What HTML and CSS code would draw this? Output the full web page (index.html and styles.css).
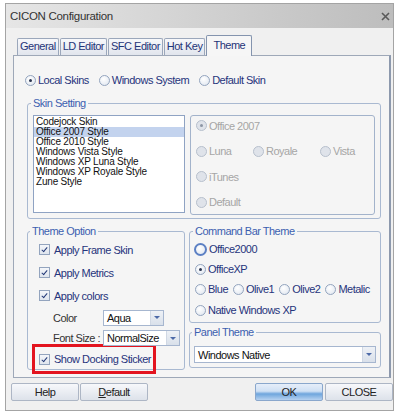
FILE: index.html
```html
<!DOCTYPE html>
<html lang="en">
<head>
  <meta charset="UTF-8" />
  <title>CICON Configuration</title>
  <link rel="stylesheet" href="styles.css">
</head>
<body>
  <div class="window">
    <div class="titlebar">
      <span>CICON Configuration</span>
      <svg class="close" width="9" height="9" viewBox="0 0 9 9">
        <path d="M1 1 L8 8 M8 1 L1 8" stroke="#5a5a5a" stroke-width="1.6" />
      </svg>
    </div>

    <div class="tabs">
      <span class="tab">General</span>
      <span class="tab">LD Editor</span>
      <span class="tab">SFC Editor</span>
      <span class="tab">Hot Key</span>
      <span class="tab active">Theme</span>
    </div>

    <div class="page">
      <div class="skin-source">
        <label class="opt"><span class="radio checked"></span>Local Skins</label>
        <label class="opt"><span class="radio"></span>Windows System</label>
        <label class="opt"><span class="radio"></span>Default Skin</label>
      </div>

      <fieldset class="group skin-group">
        <legend>Skin Setting</legend>
        <div class="skin-body">
          <ul class="listbox">
            <li>Codejock Skin</li>
            <li class="selected">Office 2007 Style</li>
            <li>Office 2010 Style</li>
            <li>Windows Vista Style</li>
            <li>Windows XP Luna Style</li>
            <li>Windows XP Royale Style</li>
            <li>Zune Style</li>
          </ul>
          <div class="style-box">
            <div class="style-row">
              <label class="opt disabled"><span class="radio checked"></span>Office 2007</label>
            </div>
            <div class="style-row three">
              <label class="opt disabled"><span class="radio"></span>Luna</label>
              <label class="opt disabled"><span class="radio"></span>Royale</label>
              <label class="opt disabled"><span class="radio"></span>Vista</label>
            </div>
            <div class="style-row">
              <label class="opt disabled"><span class="radio"></span>iTunes</label>
            </div>
            <div class="style-row">
              <label class="opt disabled"><span class="radio"></span>Default</label>
            </div>
          </div>
        </div>
      </fieldset>

      <div class="columns">
        <fieldset class="group theme-option">
          <legend>Theme Option</legend>
          <label class="check-row"><span class="checkbox"></span>Apply Frame Skin</label>
          <label class="check-row"><span class="checkbox"></span>Apply Metrics</label>
          <label class="check-row"><span class="checkbox"></span>Apply colors</label>
          <div class="field-row color-row">
            <span class="field-label">Color</span>
            <div class="combo combo-color"><span>Aqua</span><span class="drop"></span></div>
          </div>
          <div class="field-row font-row">
            <span class="field-label">Font Size :</span>
            <div class="combo combo-font"><span>NormalSize</span><span class="drop"></span></div>
          </div>
          <label class="check-row marked"><span class="checkbox"></span>Show Docking Sticker</label>
        </fieldset>

        <div class="right-col">
          <fieldset class="group cmdbar">
            <legend>Command Bar Theme</legend>
            <div class="cmd-row"><label class="opt"><span class="radio focus"></span>Office2000</label></div>
            <div class="cmd-row"><label class="opt"><span class="radio checked"></span>OfficeXP</label></div>
            <div class="cmd-row four">
              <label class="opt"><span class="radio"></span>Blue</label>
              <label class="opt"><span class="radio"></span>Olive1</label>
              <label class="opt"><span class="radio"></span>Olive2</label>
              <label class="opt"><span class="radio"></span>Metalic</label>
            </div>
            <div class="cmd-row last"><label class="opt"><span class="radio"></span>Native Windows XP</label></div>
          </fieldset>

          <fieldset class="group panel-theme">
            <legend>Panel Theme</legend>
            <div class="combo combo-panel"><span>Windows Native</span><span class="drop"></span></div>
          </fieldset>
        </div>
      </div>
    </div>

    <div class="buttons">
      <span class="btn">Help</span>
      <span class="btn"><u>D</u>efault</span>
      <span class="spacer"></span>
      <span class="btn ok">OK</span>
      <span class="btn">CLOSE</span>
    </div>
  </div>
</body>
</html>
```

FILE: styles.css
```css
body {
  margin: 0;
  background: #fff;
  font-family: "Liberation Sans", Arial, sans-serif;
  font-size: 11px;
  letter-spacing: -0.5px;
  color: #26347c;
}

.window {
  box-sizing: border-box;
  width: 389px;
  height: 408px;
  margin: 3px 0 0 5px;
  border: 1px solid #a4a4a4;
  background: #f0f0f0;
  display: flex;
  flex-direction: column;
}

.titlebar {
  height: 24px;
  flex: none;
  display: flex;
  align-items: center;
  justify-content: space-between;
  padding: 0 3px 0 4px;
  background: linear-gradient(to right, #e6e6e6, #bdbdbd);
  color: #333;
  font-size: 11.5px;
  letter-spacing: -0.3px;
}

/* tab strip */
.tabs {
  display: flex;
  align-items: flex-end;
  height: 20px;
  margin: 7px 0 0 11px;
  flex: none;
}

.tab {
  box-sizing: border-box;
  height: 17px;
  line-height: 15px;
  padding: 0 2px;
  margin-right: 1px;
  border: 1px solid #9ba7bb;
  border-bottom: none;
  border-radius: 2px 2px 0 0;
  background: linear-gradient(#f7f8fb, #e1e5ed);
  color: #1f3478;
  white-space: nowrap;
}

.tab.active {
  position: relative;
  height: 21px;
  line-height: 18px;
  margin-bottom: -1px;
  padding: 0 6px;
  background: #f6f6f6;
  border-color: #8494ae;
}

.page {
  box-sizing: border-box;
  height: 323px;
  margin: 0 2px 0 7px;
  padding: 17px 8px 0 13px;
  border: 1px solid #9ea8b8;
  border-right: 2px solid #8d99ad;
  background: #f5f5f5;
  flex: none;
}

/* radios and checkboxes */
.opt {
  display: inline-flex;
  align-items: center;
  gap: 2px;
  white-space: nowrap;
}

.radio {
  box-sizing: border-box;
  width: 11px;
  height: 11px;
  flex: none;
  border: 1px solid #93a4be;
  border-radius: 50%;
  background: radial-gradient(circle at 40% 35%, #ffffff, #dde4ee);
  display: inline-flex;
  align-items: center;
  justify-content: center;
}

.radio.checked::after {
  content: "";
  width: 3px;
  height: 3px;
  border-radius: 50%;
  background: #2b3550;
}

.radio.focus {
  width: 13px;
  height: 13px;
  margin-left: -1px;
  border: 2px solid #5c80c4;
}

.opt.disabled {
  color: #a6a6a6;
}

.opt.disabled .radio {
  border-color: #b7c0cd;
  background: #dfe3ea;
}

.opt.disabled .radio.checked::after {
  background: #8d96a5;
}

.checkbox {
  box-sizing: border-box;
  width: 11px;
  height: 11px;
  flex: none;
  border: 1px solid #93a4be;
  background: linear-gradient(#f4f6fa, #dfe5ee);
  position: relative;
}

.checkbox::after {
  content: "";
  position: absolute;
  left: 3px;
  top: 1px;
  width: 2px;
  height: 5px;
  border: solid #243a78;
  border-width: 0 1.5px 1.5px 0;
  transform: rotate(40deg);
}

.skin-source {
  display: flex;
  align-items: center;
  gap: 10px;
  height: 14px;
  margin-left: -2px;
}

/* group boxes */
.group {
  margin: 0;
  min-width: 0;
  border: 1px solid #a9b9d1;
  border-radius: 3px;
}

.group legend {
  padding: 0 2px;
  margin-left: -2px;
  line-height: 12px;
  color: #3c5fb0;
}

.skin-group {
  margin-top: 10px;
  padding: 6px 5px 3px 5px;
}

.skin-body {
  display: flex;
  align-items: flex-start;
  gap: 5px;
}

.listbox {
  box-sizing: border-box;
  width: 152px;
  height: 98px;
  margin: 0;
  padding: 1px 0 0 0;
  list-style: none;
  background: #fff;
  border: 1px solid #8fa3c3;
  color: #111;
  font-size: 10px;
  letter-spacing: -0.2px;
}

.listbox li {
  line-height: 10px;
  height: 10px;
  padding-left: 2px;
  white-space: nowrap;
}

.listbox li.selected {
  background: #c3d3ee;
}

.style-box {
  box-sizing: border-box;
  width: 185px;
  height: 100px;
  padding: 3px 5px 5px 5px;
  border: 1px solid #a3b3cb;
  border-radius: 3px;
  display: flex;
  flex-direction: column;
  justify-content: space-between;
}

.style-row {
  height: 13px;
  display: flex;
  align-items: center;
}

.style-row.three {
  display: grid;
  grid-template-columns: 57px 67px auto;
}

.columns {
  display: flex;
  gap: 4px;
  margin-top: 6px;
}

/* theme option */
.theme-option {
  width: 158px;
  box-sizing: border-box;
  padding: 1px 4px 0 4px;
}

.check-row {
  display: flex;
  align-items: center;
  gap: 4px;
  height: 23px;
  padding-left: 7px;
  white-space: nowrap;
}

.check-row.marked {
  box-sizing: border-box;
  width: 124px;
  height: 30px;
  margin: -4px 0 -5px 0;
  padding-left: 4px;
  border: 3px solid #e3141f;
}

.field-row {
  display: flex;
  align-items: center;
  padding-left: 21px;
}

.color-row {
  height: 21px;
}

.font-row {
  height: 20px;
}

.field-label {
  width: 50px;
  flex: none;
  color: #333;
  white-space: nowrap;
}

.combo {
  box-sizing: border-box;
  display: flex;
  align-items: center;
  justify-content: space-between;
  height: 16px;
  padding-left: 3px;
  border: 1px solid #a6b6cf;
  background: #fff;
  color: #111;
  white-space: nowrap;
  overflow: hidden;
}

.combo .drop {
  align-self: stretch;
  width: 12px;
  flex: none;
  background: linear-gradient(#eef1f6, #d9e0ea);
  border-left: 1px solid #d0d8e4;
  display: flex;
  align-items: center;
  justify-content: center;
}

.combo .drop::after {
  content: "";
  border-left: 3px solid transparent;
  border-right: 3px solid transparent;
  border-top: 3px solid #4d6aa8;
}

.combo-color {
  width: 61px;
}

.combo-font {
  width: 79px;
}

/* right column */
.right-col {
  display: flex;
  flex-direction: column;
  width: 192px;
}

.cmdbar {
  padding: 2px 5px 2px 5px;
}

.cmd-row {
  height: 20px;
  display: flex;
  align-items: center;
}

.cmd-row.four {
  gap: 5px;
}

.cmd-row.last {
  margin-top: 1px;
}

.panel-theme {
  margin-top: 3px;
  padding: 8px 4px 4px 4px;
}

.combo-panel {
  height: 17px;
}

/* bottom buttons */
.buttons {
  display: flex;
  height: 18px;
  margin-top: 5px;
  padding-left: 5px;
  gap: 1px;
  flex: none;
}

.spacer {
  flex: 1;
}

.btn {
  box-sizing: border-box;
  width: 68px;
  height: 18px;
  line-height: 16px;
  text-align: center;
  border: 1px solid #adb6c5;
  border-radius: 2px;
  background: linear-gradient(#f7f8fb, #dde2ea);
  color: #222;
}

.btn.ok {
  margin-right: 1px;
  background: linear-gradient(#e6eef9 0%, #cfe0f4 45%, #6ea5dd 62%, #b7d2f0 100%);
  border-color: #8aa7cc;
}
```
